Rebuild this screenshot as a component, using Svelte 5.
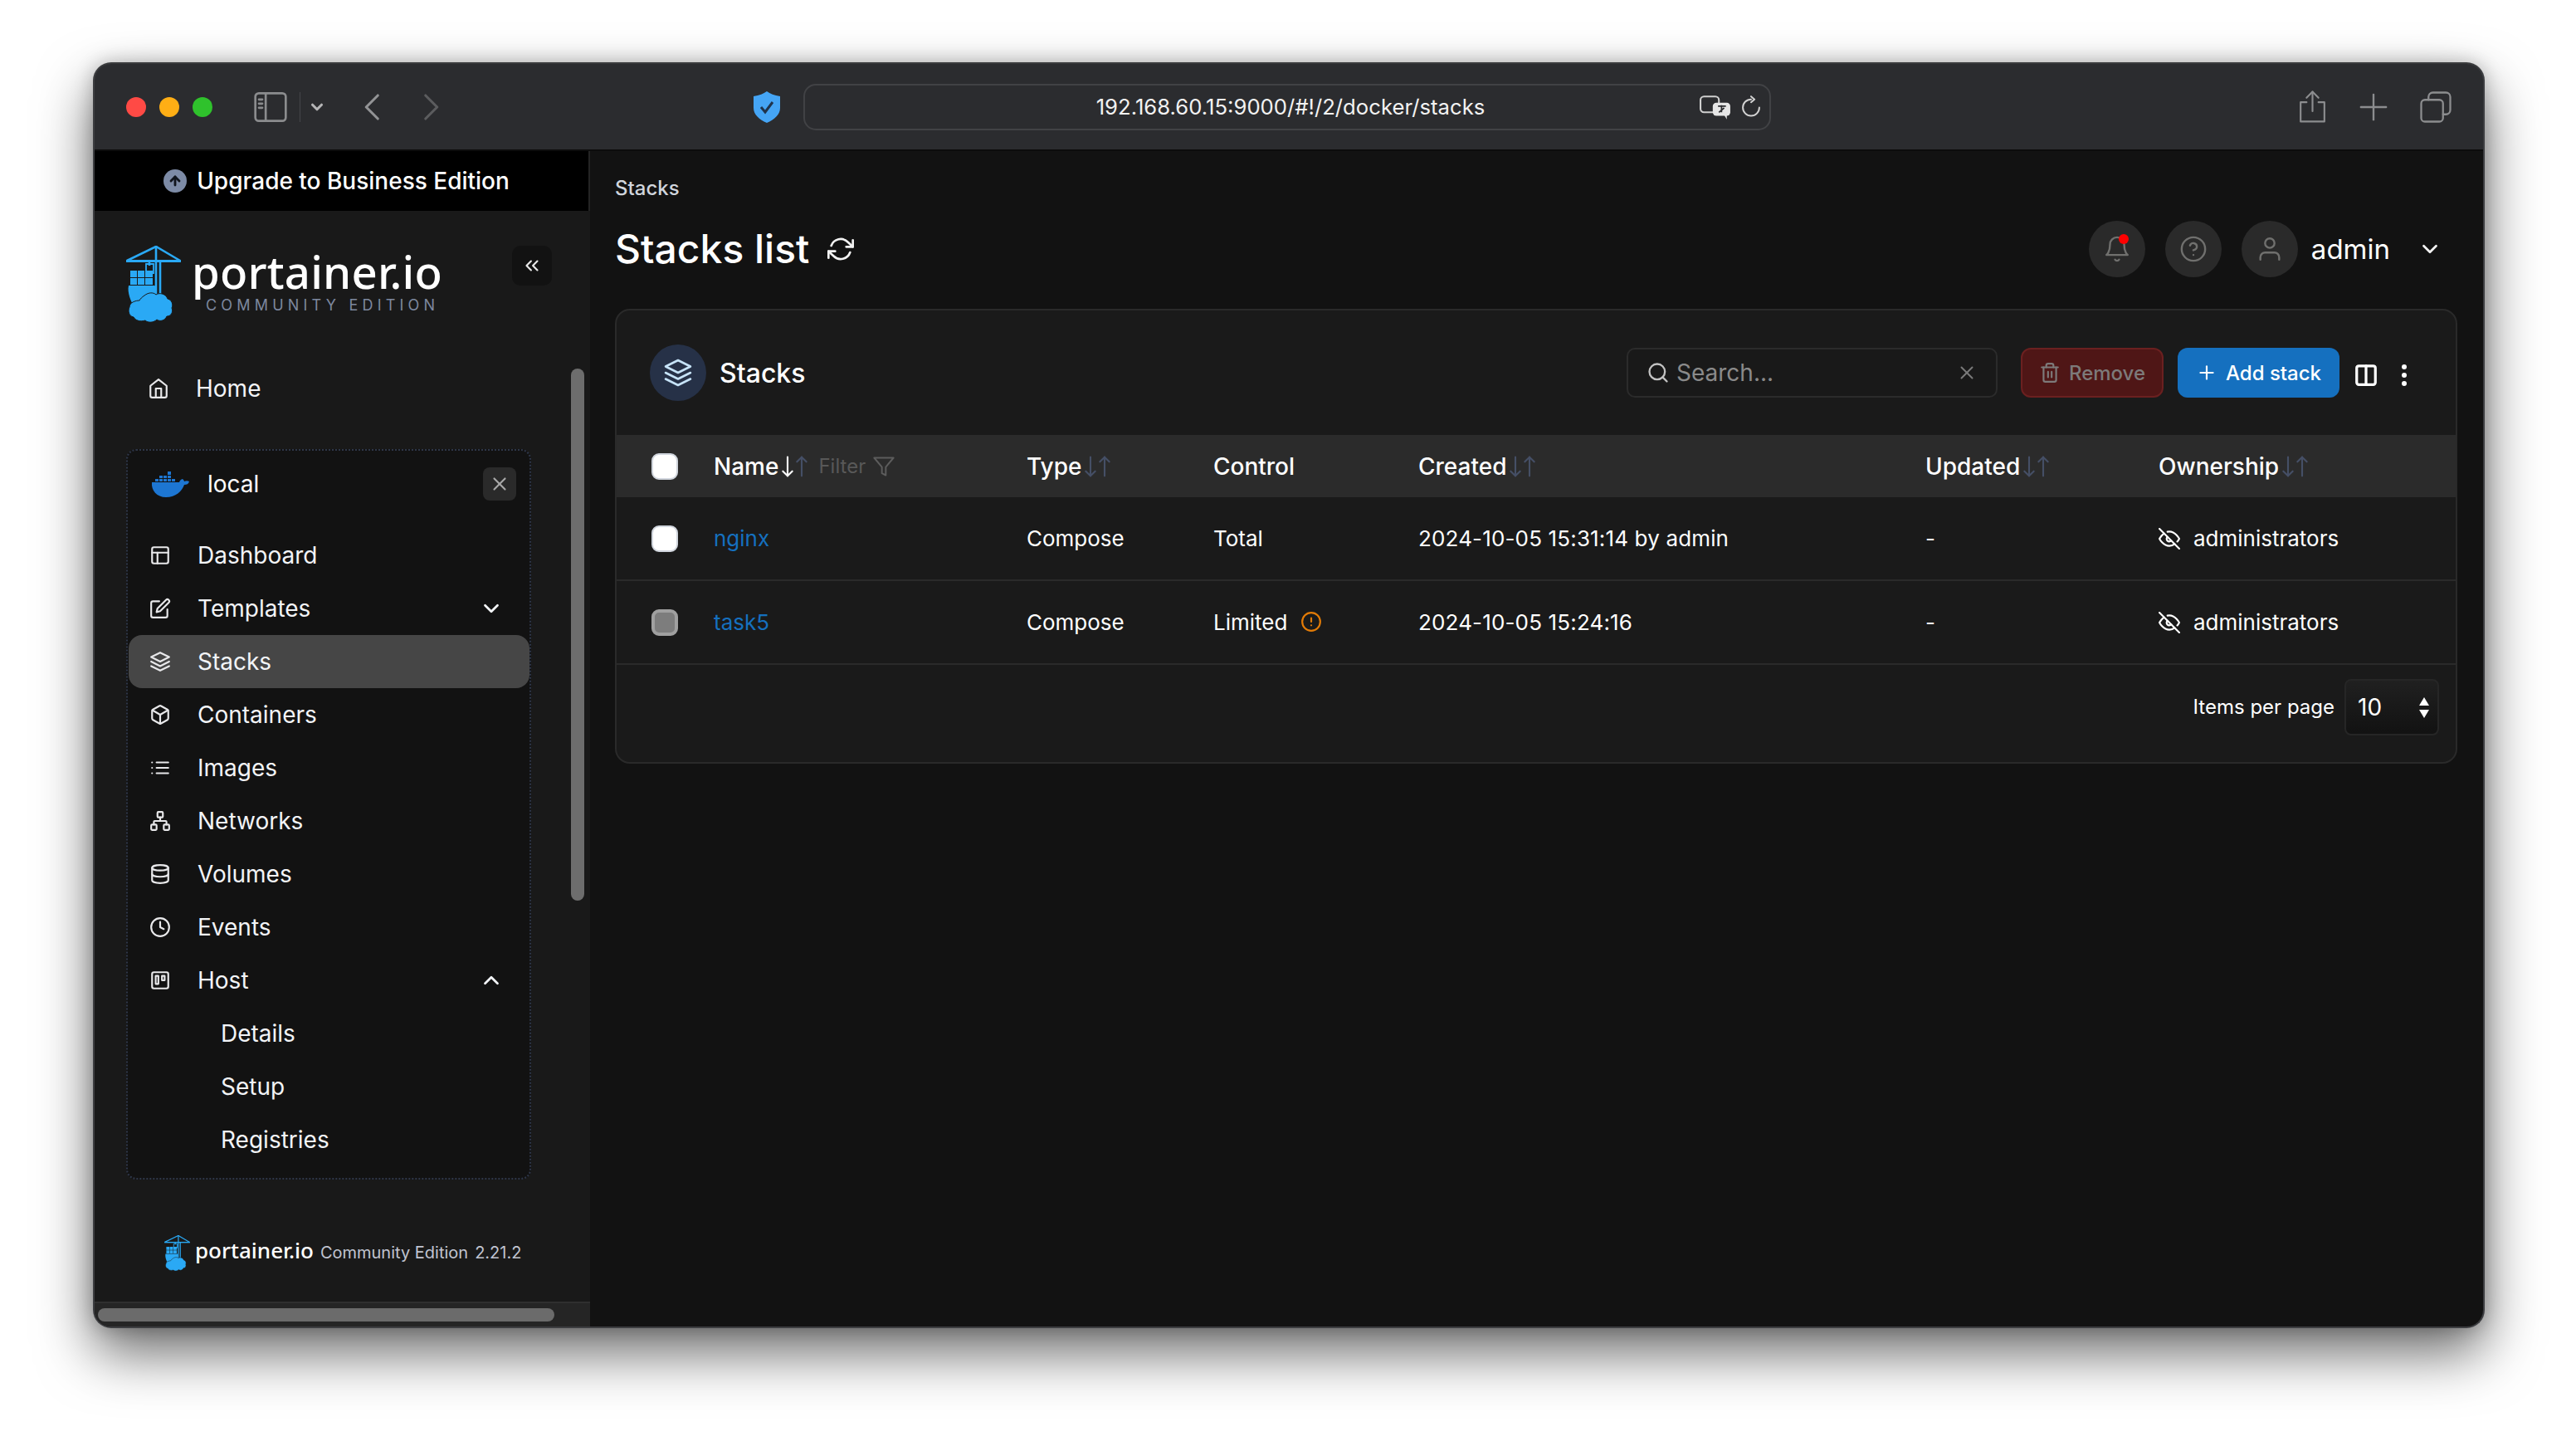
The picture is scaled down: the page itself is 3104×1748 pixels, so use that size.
<script>
  const c = (x, y, r) => `M${x - r} ${y}a${r} ${r} 0 1 0 ${2 * r} 0a${r} ${r} 0 1 0 ${-2 * r} 0z`;
  const r = (x, y, w, h, q = 2) => `M${x + q} ${y}h${w - 2 * q}a${q} ${q} 0 0 1 ${q} ${q}v${h - 2 * q}a${q} ${q} 0 0 1 ${-q} ${q}h${-(w - 2 * q)}a${q} ${q} 0 0 1 ${-q} ${-q}v${-(h - 2 * q)}a${q} ${q} 0 0 1 ${q} ${-q}z`;
  const icons = {
    home: ['M3 9l9-7 9 7v11a2 2 0 0 1-2 2H5a2 2 0 0 1-2-2z', 'M9 22V12h6v10'],
    layout: [r(3, 3, 18, 18), 'M3 9h18', 'M9 21V9'],
    edit: ['M11 4H4a2 2 0 0 0-2 2v14a2 2 0 0 0 2 2h14a2 2 0 0 0 2-2v-7', 'M18.5 2.5a2.121 2.121 0 0 1 3 3L12 15l-4 1 1-4 9.5-9.5z'],
    layers: ['M12 2 2 7l10 5 10-5z', 'M2 17l10 5 10-5', 'M2 12l10 5 10-5'],
    box: ['M21 16V8a2 2 0 0 0-1-1.73l-7-4a2 2 0 0 0-2 0l-7 4A2 2 0 0 0 3 8v8a2 2 0 0 0 1 1.73l7 4a2 2 0 0 0 2 0l7-4A2 2 0 0 0 21 16z', 'M3.27 6.96 12 12.01l8.73-5.05', 'M12 22.08V12'],
    list: ['M8 6h13', 'M8 12h13', 'M8 18h13', 'M3 6h.01', 'M3 12h.01', 'M3 18h.01'],
    network: [r(9, 2, 6, 6, 1), r(2, 16, 6, 6, 1), r(16, 16, 6, 6, 1), 'M5 16v-3a1 1 0 0 1 1-1h12a1 1 0 0 1 1 1v3', 'M12 12V8'],
    database: ['M3 5c0-1.66 4-3 9-3s9 1.34 9 3-4 3-9 3-9-1.34-9-3z', 'M21 12c0 1.66-4 3-9 3s-9-1.34-9-3', 'M3 5v14c0 1.66 4 3 9 3s9-1.34 9-3V5'],
    clock: [c(12, 12, 10), 'M12 6v6l4 2'],
    trello: [r(3, 3, 18, 18), r(7, 7, 3, 9, 0.2), r(14, 7, 3, 5, 0.2)],
    refresh: ['M23 4v6h-6', 'M1 20v-6h6', 'M3.51 9a9 9 0 0 1 14.85-3.36L23 10M1 14l4.64 4.36A9 9 0 0 0 20.49 15'],
    bell: ['M18 8A6 6 0 0 0 6 8c0 7-3 9-3 9h18s-3-2-3-9', 'M13.73 21a2 2 0 0 1-3.46 0'],
    help: [c(12, 12, 10), 'M9.09 9a3 3 0 0 1 5.83 1c0 2-3 3-3 3', 'M12 17h.01'],
    user: ['M20 21v-2a4 4 0 0 0-4-4H8a4 4 0 0 0-4 4v2', c(12, 7, 4)],
    search: [c(11, 11, 8), 'M21 21l-4.35-4.35'],
    x: ['M18 6 6 18', 'M6 6l12 12'],
    trash: ['M3 6h18', 'M19 6v14a2 2 0 0 1-2 2H7a2 2 0 0 1-2-2V6m3 0V4a2 2 0 0 1 2-2h4a2 2 0 0 1 2 2v2', 'M10 11v6', 'M14 11v6'],
    plus: ['M12 5v14', 'M5 12h14'],
    columns: [r(3, 3, 18, 18), 'M12 3v18'],
    eyeoff: ['M17.94 17.94A10.07 10.07 0 0 1 12 20c-7 0-11-8-11-8a18.45 18.45 0 0 1 5.06-5.94M9.9 4.24A9.12 9.12 0 0 1 12 4c7 0 11 8 11 8a18.5 18.5 0 0 1-2.16 3.19m-6.72-1.07a3 3 0 1 1-4.24-4.24', 'M1 1l22 22'],
    alert: [c(12, 12, 10), 'M12 8v4', 'M12 16h.01'],
    filter: ['M22 3H2l8 9.46V19l4 2v-8.54z'],
    down: ['M12 4v16', 'M16 16l-4 4-4-4'],
    up: ['M12 20V4', 'M8 8l4-4 4 4'],
    chevdown: ['M6 9l6 6 6-6'],
    chevup: ['M18 15l-6-6-6 6'],
    chevleft: ['M15 4l-8 8 8 8'],
    chevright: ['M9 4l8 8-8 8'],
    chevsleft: ['M11 17l-5-5 5-5', 'M18 17l-5-5 5-5'],
    arrowup: ['M12 18V6', 'M6 12l6-6 6 6'],
    share: ['M8 9H4v13h16V9h-4', 'M12 15V2', 'M8 6l4-4 4 4'],
    tabs: [r(2, 7, 15, 15, 2.5), 'M7 7V5a3 3 0 0 1 3-3h9a3 3 0 0 1 3 3v9a3 3 0 0 1-3 3h-2'],
    sidebar: [r(1, 2, 22, 20, 2.5), 'M8.5 2v20', 'M3.6 6.5h2.4', 'M3.6 9.5h2.4', 'M3.6 12.5h2.4'],
    reload: ['M12 4a8.5 8.5 0 1 0 8.5 8.5', 'M12 1l3.5 3-3.5 3']
  };

  const nav = [
    { icon: 'layout', label: 'Dashboard' },
    { icon: 'edit', label: 'Templates', chev: 'chevdown' },
    { icon: 'layers', label: 'Stacks', active: true },
    { icon: 'box', label: 'Containers' },
    { icon: 'list', label: 'Images' },
    { icon: 'network', label: 'Networks' },
    { icon: 'database', label: 'Volumes' },
    { icon: 'clock', label: 'Events' },
    { icon: 'trello', label: 'Host', chev: 'chevup' }
  ];
  const sub = ['Details', 'Setup', 'Registries'];
  const rows = [
    { name: 'nginx', control: 'Total', created: '2024-10-05 15:31:14 by admin' },
    { name: 'task5', control: 'Limited', warn: true, created: '2024-10-05 15:24:16', disabled: true }
  ];
  const heads = [
    { label: 'Type' },
    { label: 'Control', nosort: true },
    { label: 'Created' },
    { label: 'Updated' },
    { label: 'Ownership' }
  ];
</script>

{#snippet icon(name, cls)}
  <svg class={'ic ' + cls} viewBox="0 0 24 24" fill="none" stroke="currentColor" stroke-linecap="round" stroke-linejoin="round" aria-hidden="true">
    {#each icons[name] as d}<path {d} />{/each}
  </svg>
{/snippet}

{#snippet crane(cls)}
  <svg class={cls} viewBox="0 0 66 92" aria-hidden="true">
    <g fill="none" stroke="#2aa9f5" stroke-width="2.6">
      <path d="M0 18.5h66" stroke-width="3" />
      <path d="M1 18 36 1l29 17" />
      <path d="M36 0v74M41 17v57M28 18v6" />
    </g>
    <path fill="none" stroke="#2aa9f5" stroke-width="1.8" d="M24 22h9v11h-9z" />
    <path fill="#2aa9f5" d="M14 30h8v8h-8zM23 30h9v8h-9zM23 39h9v8h-9zM14 39h8v8h-8zM5 39h8v8H5zM5 30h8v8H5z" />
    <path fill="#2aa9f5" d="M3 48h31c2 0 3 8-1 14-2 4-8 7-12 8l-12 2C6 68 1 56 3 48z" />
    <path fill="#2aa9f5" stroke="#191919" stroke-width="1" d="M22 60c5-4 11-4 14-1 4-3 12-1 14 5 5 1 7 7 5 11 2 5-1 10-6 10-2 5-8 7-12 4-4 4-11 4-14 1-6 2-12 0-14-4-6-1-7-8-5-12 0-6 8-8 12-8 1-2 3-4 6-6z" />
  </svg>
{/snippet}

<div class="window">
  <header class="titlebar">
    <div class="lights"><span class="red"></span><span class="amber"></span><span class="green"></span></div>
    <div class="sidetoggle">
      {@render icon('sidebar', 'tb-side')}
      <span class="tb-div"></span>
      {@render icon('chevdown', 'tb-chev')}
    </div>
    <div class="navarrows">
      {@render icon('chevleft', 'tb-back')}
      {@render icon('chevright', 'tb-fwd')}
    </div>
    <svg class="shield" viewBox="0 0 32 38" aria-hidden="true">
      <path fill="#45a5f5" d="M16 0c4 3 9 5 16 6v14c0 8-7 14-16 18C7 34 0 28 0 20V6c7-1 12-3 16-6z" />
      <path fill="none" stroke="#20344c" stroke-width="3" d="M9 19l5 6 9-12" />
    </svg>
    <div class="urlbar">
      <span class="url">192.168.60.15:9000/#!/2/docker/stacks</span>
      <svg class="translate" viewBox="0 0 36 28" aria-hidden="true">
        <rect x="1" y="1" width="21" height="18" rx="4" fill="none" stroke="#cfcfcf" stroke-width="2" />
        <rect x="15" y="8" width="20" height="15" rx="4" fill="#e6e6e6" />
        <path d="M28 22l3 5v-5z" fill="#e6e6e6" />
        <path d="M21 12h9M25 11v8M22 19l6-5" stroke="#2b2c2f" stroke-width="1.6" fill="none" />
      </svg>
      {@render icon('reload', 'tb-reload')}
    </div>
    <div class="tb-right">
      {@render icon('share', 'tb-share')}
      {@render icon('plus', 'tb-plus')}
      {@render icon('tabs', 'tb-tabs')}
    </div>
  </header>

  <div class="app">
    <aside class="sidebar">
      <div class="upgrade">
        <span class="up-ic">{@render icon('arrowup', 'up-arrow')}</span>
        <span>Upgrade to Business Edition</span>
      </div>
      <div class="brand">
        {@render crane('crane')}
        <div class="wordmark">
          <span class="pname">portainer.io</span>
          <span class="pedition">COMMUNITY EDITION</span>
        </div>
        <button class="collapse" aria-label="Collapse">{@render icon('chevsleft', 'collapse-ic')}</button>
      </div>
      <a class="home" href="#home">{@render icon('home', 'nav-ic')}<span>Home</span></a>
      <section class="envbox">
        <div class="envhead">
          <svg class="docker" viewBox="0 0 46 32" aria-hidden="true">
            <path fill="#1d76d2" d="M1 14h33c1-3 3-4 4-4 1 1 2 2 2 3 2-1 4-1 6 0-1 3-3 4-6 4-3 8-10 15-22 15C7 32 0 24 1 14z" />
            <path fill="#1d76d2" d="M5 10h4v3H5zM10 10h4v3h-4zM15 10h4v3h-4zM20 10h4v3h-4zM25 10h4v3h-4zM10 6h4v3h-4zM15 6h4v3h-4zM20 6h4v3h-4zM20 1h4v4h-4z" />
          </svg>
          <span class="envname">local</span>
          <button class="envclose" aria-label="Close">{@render icon('x', 'envx')}</button>
        </div>
        {#each nav as item}
          <a class="navrow" class:active={item.active} href="#nav">
            {@render icon(item.icon, 'nav-ic')}
            <span>{item.label}</span>
            {#if item.chev}{@render icon(item.chev, 'nav-chev')}{/if}
          </a>
        {/each}
        {#each sub as s}
          <a class="navrow subrow" href="#sub"><span>{s}</span></a>
        {/each}
      </section>
      <div class="sidefoot">
        {@render crane('crane-sm')}
        <span class="fname">portainer.io</span>
        <span class="fed">Community Edition</span>
        <span class="fver">2.21.2</span>
      </div>
      <div class="hscroll"><span class="hthumb"></span></div>
      <span class="vthumb"></span>
    </aside>

    <main class="main">
      <div class="crumb">Stacks</div>
      <div class="pagehead">
        <h1>Stacks list</h1>
        {@render icon('refresh', 'title-ref')}
        <div class="topright">
          <span class="round bell">{@render icon('bell', 'round-ic')}<i class="dot"></i></span>
          <span class="round">{@render icon('help', 'round-ic')}</span>
          <span class="round">{@render icon('user', 'round-ic')}</span>
          <span class="admin">admin</span>
          {@render icon('chevdown', 'admin-chev')}
        </div>
      </div>

      <section class="card">
        <div class="cardhead">
          <span class="cardic">{@render icon('layers', 'cardic-svg')}</span>
          <h2>Stacks</h2>
          <div class="search">
            {@render icon('search', 's-ic')}
            <span class="s-text">Search...</span>
            {@render icon('x', 's-x')}
          </div>
          <button class="btn remove">{@render icon('trash', 'btn-ic')}Remove</button>
          <button class="btn add">{@render icon('plus', 'btn-ic')}Add stack</button>
          {@render icon('columns', 'colbtn')}
          <span class="dots"><i></i><i></i><i></i></span>
        </div>

        <div class="row thead">
          <span class="cb"></span>
          <span class="th">Name<span class="sort">{@render icon('down', 'arr on')}{@render icon('up', 'arr')}</span><span class="filter">Filter</span>{@render icon('filter', 'funnel')}</span>
          {#each heads as h}
            <span class="th">{h.label}{#if !h.nosort}<span class="sort">{@render icon('down', 'arr')}{@render icon('up', 'arr')}</span>{/if}</span>
          {/each}
        </div>

        {#each rows as row}
          <div class="row tr">
            <span class="cb" class:dis={row.disabled}></span>
            <a class="link" href="#stack">{row.name}</a>
            <span>Compose</span>
            <span class="ctl">{row.control}{#if row.warn}{@render icon('alert', 'warn')}{/if}</span>
            <span class="created">{row.created}</span>
            <span>-</span>
            <span class="own">{@render icon('eyeoff', 'eye')}administrators</span>
          </div>
        {/each}

        <div class="cardfoot">
          <span class="ipp">Items per page</span>
          <div class="select">
            <span>10</span>
            <span class="spin"><i class="tri-up"></i><i class="tri-down"></i></span>
          </div>
        </div>
      </section>
    </main>
  </div>
</div>

<style>
  :global(body) {
    margin: 0;
    background: #fff;
    font-family: Inter, 'Liberation Sans', sans-serif;
  }
  .window {
    box-sizing: border-box;
    width: 2882px;
    height: 1525px;
    margin: 75px 0 148px 112px;
    border-radius: 22px;
    overflow: hidden;
    background: #2b2c2f;
    box-shadow: 0 0 0 1px #55565a inset, 0 30px 66px rgba(0, 0, 0, 0.58), 0 0 22px rgba(0, 0, 0, 0.22);
    border: 2px solid #3c3d40;
    border-top-color: #3a3b3d;
    color: #fff;
    display: flex;
    flex-direction: column;
  }
  .ic { display: block; flex: none; stroke-width: 2; }

  .titlebar {
    flex: none;
    display: flex;
    align-items: center;
    background: #2b2c2f;
    border-bottom: 2px solid #0c0c0c;
    box-sizing: content-box;
    height: 103px;
  }
  .lights { display: flex; gap: 16px; margin-left: 38px; }
  .lights span { width: 24px; height: 24px; border-radius: 50%; }
  .red { background: #ff4a45; }
  .amber { background: #ffae15; }
  .green { background: #2fc22c; }
  .sidetoggle { display: flex; align-items: center; margin-left: 50px; color: #8b8c8e; }
  .tb-side { width: 40px; height: 40px; stroke-width: 1.6; }
  .tb-div { width: 1px; height: 36px; background: #45464a; margin-left: 15px; }
  .tb-chev { width: 22px; height: 22px; margin-left: 9px; stroke-width: 3.4; color: #b5b5b6; }
  .navarrows { display: flex; margin-left: 36px; gap: 26px; }
  .tb-back { width: 42px; height: 42px; color: #929395; stroke-width: 1.8; }
  .tb-fwd { width: 42px; height: 42px; color: #5b5c5e; stroke-width: 1.8; }
  .shield { width: 32px; height: 38px; margin-left: 369px; flex: none; }
  .urlbar {
    position: relative;
    margin-left: 28px;
    width: 1166px;
    height: 56px;
    box-sizing: border-box;
    border: 2px solid #414245;
    border-radius: 15px;
    display: flex;
    align-items: center;
    justify-content: center;
  }
  .url { font-size: 25.7px; color: #f2f2f2; margin-left: 8px; }
  .translate { position: absolute; right: 46px; top: 12px; width: 38px; height: 30px; }
  .tb-reload { position: absolute; right: 8px; top: 12px; width: 28px; height: 28px; color: #d2d2d2; stroke-width: 1.7; }
  .tb-right { display: flex; align-items: center; color: #8c8d8f; margin-left: 631px; }
  .tb-share { width: 43px; height: 43px; stroke-width: 1.2; }
  .tb-plus { width: 52px; height: 52px; margin-left: 26px; stroke-width: 1.1; }
  .tb-tabs { width: 42px; height: 42px; margin-left: 28px; stroke-width: 1.3; }

  .app { flex: 1; display: flex; min-height: 0; background: #121212; }

  .sidebar {
    position: relative;
    width: 597px;
    flex: none;
    background: #191919;
    display: flex;
    flex-direction: column;
    font-size: 28px;
  }
  .upgrade {
    height: 72px;
    flex: none;
    box-sizing: border-box;
    background: #000;
    border-right: 2px solid #242424;
    display: flex;
    align-items: center;
    justify-content: center;
    gap: 12px;
    font-weight: 500;
    padding-right: 12px;
  }
  .up-ic { width: 28px; height: 28px; border-radius: 50%; background: #7d8ba6; display: flex; align-items: center; justify-content: center; color: #10141c; }
  .up-arrow { width: 20px; height: 20px; stroke-width: 3.4; }
  .brand { height: 182px; flex: none; display: flex; align-items: flex-start; padding-left: 38px; }
  .crane { width: 66px; height: 92px; margin-top: 42px; flex: none; }
  .wordmark { display: flex; flex-direction: column; margin-left: 13px; margin-top: 48px; width: 322px; }
  .pname { font-family: 'Noto Sans', Inter, sans-serif; font-size: 54.5px; line-height: 50px; letter-spacing: 0.2px; font-weight: 500; color: #fff; }
  .pedition { font-size: 18px; line-height: 22px; letter-spacing: 5.2px; color: #7d889f; margin-left: 17px; margin-top: 5px; white-space: nowrap; }
  .collapse { width: 48px; height: 48px; margin: 42px 0 0 64px; padding: 0; background: #121212; border: 0; border-radius: 10px; color: #e8e8e8; display: flex; align-items: center; justify-content: center; }
  .collapse-ic { width: 26px; height: 26px; stroke-width: 2; }

  .home, .navrow { display: flex; align-items: center; color: #f2f4f7; text-decoration: none; height: 64px; flex: none; }
  .home { margin-left: 64px; gap: 32px; }
  .nav-ic { width: 26px; height: 26px; stroke-width: 2; color: #e8e8ea; }

  .envbox {
    box-sizing: border-box;
    margin: 41px 0 0 38px;
    width: 488px;
    height: 880px;
    background: #121212;
    border: 2px dotted #2e3648;
    border-radius: 12px;
    padding: 0 0 0 1px;
    flex: none;
  }
  .envhead { height: 94px; display: flex; align-items: center; padding: 0 0 14px 27px; box-sizing: border-box; }
  .docker { width: 46px; height: 32px; }
  .envname { margin-left: 22px; flex: 1; }
  .envclose { width: 40px; height: 40px; margin-right: 16px; padding: 0; border: 0; border-radius: 8px; background: #2a2a2a; color: #a8a8a8; display: flex; align-items: center; justify-content: center; }
  .envx { width: 26px; height: 26px; }
  .navrow { padding-left: 25px; gap: 32px; border-radius: 16px; }
  .navrow.active { background: #464646; }
  .nav-chev { width: 30px; height: 30px; margin-left: auto; margin-right: 31px; stroke-width: 2.2; }
  .subrow { padding-left: 111px; }

  .sidefoot { display: flex; align-items: center; height: 44px; margin-top: 66px; padding-left: 84px; flex: none; color: #c0c4d0; font-size: 20px; }
  .crane-sm { width: 31px; height: 43px; margin-right: 6px; flex: none; }
  .fname { font-family: 'Noto Sans', Inter, sans-serif; font-weight: 500; font-size: 26px; color: #fff; margin-top: -6px; }
  .fed { margin-left: 8px; }
  .fver { margin-left: 8px; }
  .hscroll { margin-top: auto; height: 30px; flex: none; box-sizing: border-box; background: #252525; border-top: 2px solid #2f2f2f; padding: 6px 0 0 4px; }
  .hthumb { display: block; width: 550px; height: 16px; border-radius: 8px; background: #6b6b6b; }
  .vthumb { position: absolute; left: 574px; top: 262px; width: 16px; height: 641px; border-radius: 8px; background: #6d6d6d; }

  .main { flex: 1; min-width: 0; padding: 0 31px 0 30px; box-sizing: border-box; display: flex; flex-direction: column; }
  .crumb { font-size: 24px; font-weight: 500; color: #d0d5dd; margin-top: 30px; line-height: 30px; }
  .pagehead { display: flex; align-items: center; height: 68px; margin-top: 24px; }
  h1 { margin: 0; font-size: 48px; font-weight: 500; line-height: 1; }
  .title-ref { width: 32px; height: 32px; margin-left: 22px; stroke-width: 2; color: #f2f2f2; }
  .topright { margin-left: auto; display: flex; align-items: center; padding-right: 18px; }
  .round { position: relative; width: 68px; height: 68px; border-radius: 50%; background: #2a2a2a; display: flex; align-items: center; justify-content: center; color: #70706e; margin-right: 24px; }
  .round-ic { width: 34px; height: 34px; stroke-width: 1.7; }
  .round:nth-child(3) { margin-right: 16px; }
  .dot { position: absolute; right: 20px; top: 16px; width: 12px; height: 12px; border-radius: 50%; background: #f00; }
  .admin { font-size: 33px; color: #fff; }
  .admin-chev { width: 30px; height: 30px; margin-left: 33px; stroke-width: 2.2; color: #f2f2f2; }

  .card { margin-top: 38px; height: 548px; box-sizing: border-box; background: #1a1a1a; border: 2px solid #2a2a2a; border-radius: 18px; overflow: hidden; font-size: 26px; }
  .cardhead { height: 150px; box-sizing: border-box; display: flex; align-items: center; padding: 0 0 0 40px; }
  .cardic { width: 68px; height: 68px; border-radius: 50%; background: #263147; display: flex; align-items: center; justify-content: center; color: #c6e3f8; }
  .cardic-svg { width: 36px; height: 36px; stroke-width: 1.7; }
  h2 { margin: 0 0 0 16px; font-size: 32px; font-weight: 500; flex: 1; }
  .search { width: 447px; height: 60px; box-sizing: border-box; border: 2px solid #2b2b2b; border-radius: 10px; display: flex; align-items: center; padding: 0 22px; background: #191919; }
  .s-ic { width: 28px; height: 28px; color: #c2c2c2; }
  .s-text { margin-left: 8px; flex: 1; font-size: 28px; color: #8a8a8a; }
  .s-x { width: 26px; height: 26px; color: #7a7a7a; stroke-width: 1.8; }
  .btn { height: 60px; box-sizing: border-box; border-radius: 12px; display: flex; align-items: center; justify-content: center; gap: 10px; font: 500 24px Inter, sans-serif; padding: 0; }
  .btn-ic { width: 26px; height: 26px; }
  .remove { width: 172px; margin-left: 28px; background: #4f1616; border: 2px solid #6b2020; color: #7d7a7a; }
  .add { width: 195px; margin-left: 17px; background: #1570bf; border: 0; color: #fff; }
  .colbtn { width: 30px; height: 30px; margin: 6px 0 0 17px; stroke-width: 2.6; }
  .dots { display: flex; flex-direction: column; gap: 4px; margin: 6px 58px 0 27px; width: 8px; align-items: center; }
  .dots i { width: 6px; height: 6px; border-radius: 50%; background: #fff; }

  .row {
    display: grid;
    grid-template-columns: 117px 377px 225px 247px 611px 281px 1fr;
    align-items: center;
    box-sizing: border-box;
  }
  .thead { height: 75px; background: #2b2b2b; font-size: 28px; font-weight: 500; }
  .tr { height: 101px; border-bottom: 2px solid #2a2a2a; }
  .created { letter-spacing: 0.15px; }
  .cb { width: 32px; height: 32px; box-sizing: border-box; margin-left: 42px; border-radius: 9px; background: #fff; border: 2px solid #d0d5dd; }
  .cb.dis { background: #7d7d7d; border: 4px solid #a0a0a0; }
  .th { display: flex; align-items: center; color: #fff; white-space: nowrap; }
  .sort { display: flex; margin-left: 2px; }
  .arr { width: 34px; height: 34px; margin: 0 -8.5px; color: #454f66; stroke-width: 1.5; }
  .arr.on { color: #fff; }
  .filter { margin-left: 12px; font-size: 24px; font-weight: 400; color: #585858; }
  .funnel { width: 28px; height: 28px; margin-left: 8px; color: #5c5c5c; stroke-width: 1.7; }
  .link { color: #1570bf; text-decoration: none; }
  .ctl { display: flex; align-items: center; }
  .warn { width: 26px; height: 26px; margin-left: 16px; color: #e27b07; stroke-width: 2; margin-top: -2px; }
  .own { display: flex; align-items: center; }
  .eye { width: 26px; height: 26px; margin-right: 16px; stroke-width: 2; }

  .cardfoot { display: flex; align-items: center; justify-content: flex-end; padding: 8px 20px 0 0; height: 86px; }
  .ipp { font-size: 24px; margin-right: 12px; margin-top: -2px; }
  .select {
    width: 114px;
    height: 68px;
    box-sizing: border-box;
    border: 2px solid #262626;
    border-radius: 8px;
    background: linear-gradient(#202020, #121212);
    display: flex;
    align-items: center;
    justify-content: space-between;
    padding: 0 10px 0 14px;
    font-size: 28px;
  }
  .spin { display: flex; flex-direction: column; gap: 5px; }
  .spin i { display: block; width: 0; height: 0; border-left: 6px solid transparent; border-right: 6px solid transparent; }
  .tri-up { border-bottom: 10px solid #fff; }
  .tri-down { border-top: 10px solid #fff; }
</style>
